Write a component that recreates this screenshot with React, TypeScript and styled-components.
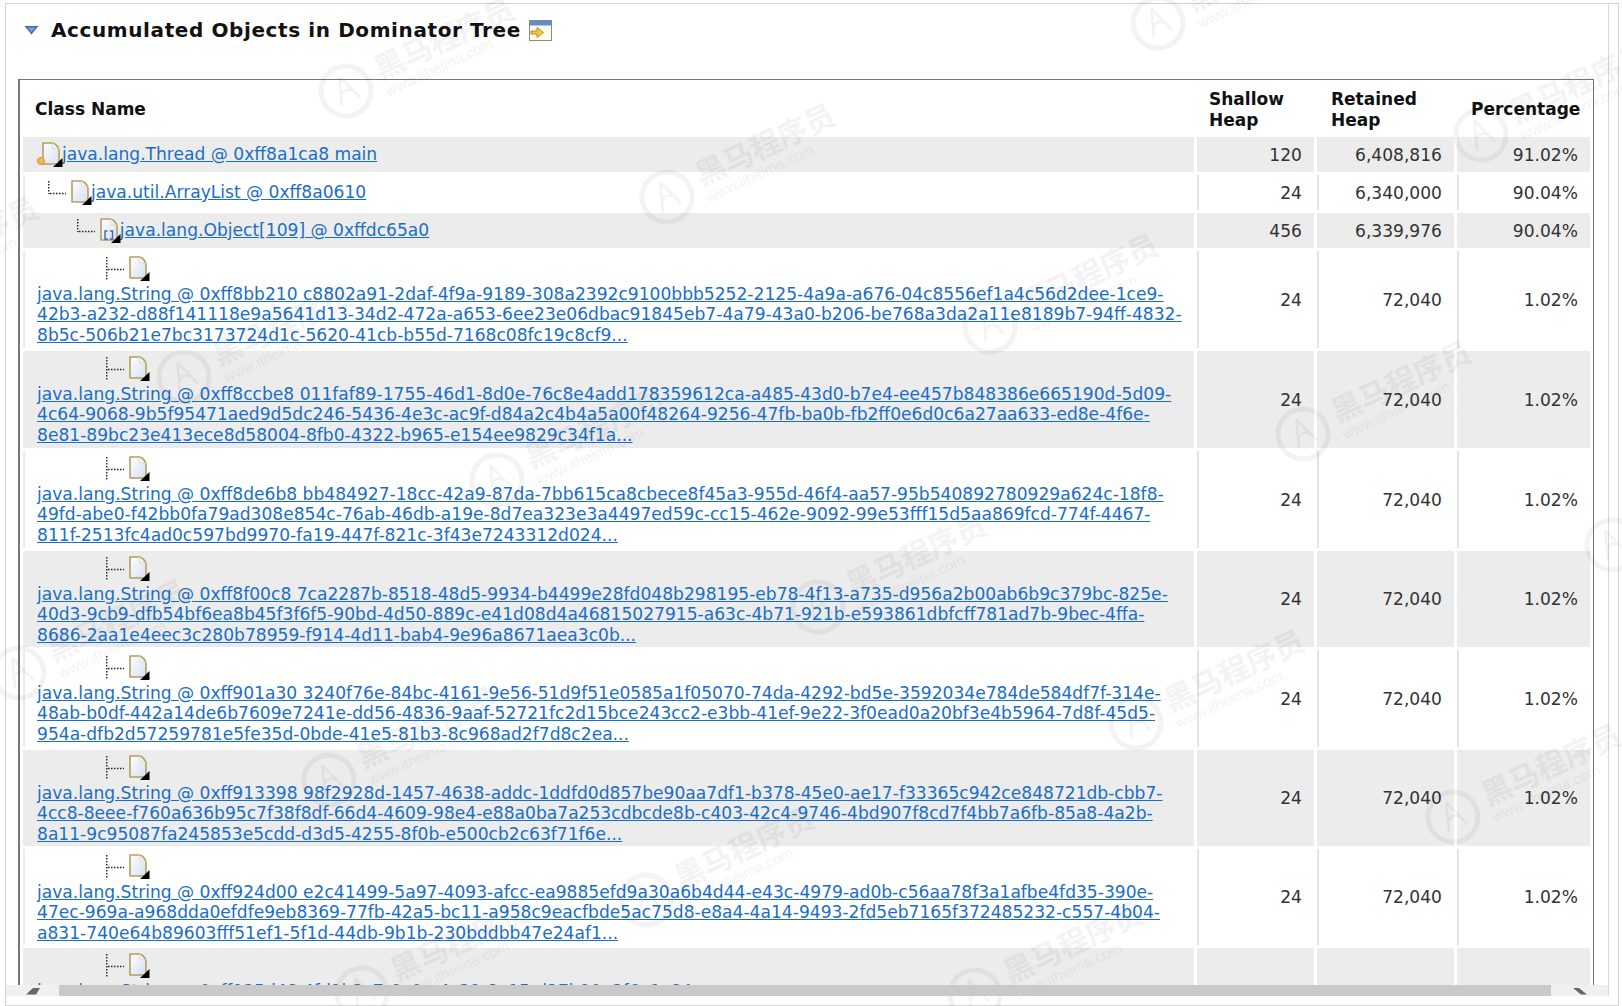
import styled, { createGlobalStyle } from 'styled-components';

type ObjectRow = {
  level: number;
  kind?: 'thread' | 'array';
  lines: string[];
  shallow: string;
  retained: string;
  percent: string;
  height: number;
};

const stringRow = (lines: string[], height = 97): ObjectRow => ({
  level: 3,
  lines,
  shallow: '24',
  retained: '72,040',
  percent: '1.02%',
  height,
});

const rows: ObjectRow[] = [
  { level: 0, kind: 'thread', lines: ['java.lang.Thread @ 0xff8a1ca8 main'], shallow: '120', retained: '6,408,816', percent: '91.02%', height: 35 },
  { level: 1, lines: ['java.util.ArrayList @ 0xff8a0610'], shallow: '24', retained: '6,340,000', percent: '90.04%', height: 35 },
  { level: 2, kind: 'array', lines: ['java.lang.Object[109] @ 0xffdc65a0'], shallow: '456', retained: '6,339,976', percent: '90.04%', height: 35 },
  stringRow([
    'java.lang.String @ 0xff8bb210 c8802a91-2daf-4f9a-9189-308a2392c9100bbb5252-2125-4a9a-a676-04c8556ef1a4c56d2dee-1ce9-',
    '42b3-a232-d88f141118e9a5641d13-34d2-472a-a653-6ee23e06dbac91845eb7-4a79-43a0-b206-be768a3da2a11e8189b7-94ff-4832-',
    '8b5c-506b21e7bc3173724d1c-5620-41cb-b55d-7168c08fc19c8cf9...',
  ]),
  stringRow([
    'java.lang.String @ 0xff8ccbe8 011faf89-1755-46d1-8d0e-76c8e4add178359612ca-a485-43d0-b7e4-ee457b848386e665190d-5d09-',
    '4c64-9068-9b5f95471aed9d5dc246-5436-4e3c-ac9f-d84a2c4b4a5a00f48264-9256-47fb-ba0b-fb2ff0e6d0c6a27aa633-ed8e-4f6e-',
    '8e81-89bc23e413ece8d58004-8fb0-4322-b965-e154ee9829c34f1a...',
  ]),
  stringRow([
    'java.lang.String @ 0xff8de6b8 bb484927-18cc-42a9-87da-7bb615ca8cbece8f45a3-955d-46f4-aa57-95b540892780929a624c-18f8-',
    '49fd-abe0-f42bb0fa79ad308e854c-76ab-46db-a19e-8d7ea323e3a4497ed59c-cc15-462e-9092-99e53fff15d5aa869fcd-774f-4467-',
    '811f-2513fc4ad0c597bd9970-fa19-447f-821c-3f43e7243312d024...',
  ]),
  stringRow([
    'java.lang.String @ 0xff8f00c8 7ca2287b-8518-48d5-9934-b4499e28fd048b298195-eb78-4f13-a735-d956a2b00ab6b9c379bc-825e-',
    '40d3-9cb9-dfb54bf6ea8b45f3f6f5-90bd-4d50-889c-e41d08d4a46815027915-a63c-4b71-921b-e593861dbfcff781ad7b-9bec-4ffa-',
    '8686-2aa1e4eec3c280b78959-f914-4d11-bab4-9e96a8671aea3c0b...',
  ], 96),
  stringRow([
    'java.lang.String @ 0xff901a30 3240f76e-84bc-4161-9e56-51d9f51e0585a1f05070-74da-4292-bd5e-3592034e784de584df7f-314e-',
    '48ab-b0df-442a14de6b7609e7241e-dd56-4836-9aaf-52721fc2d15bce243cc2-e3bb-41ef-9e22-3f0ead0a20bf3e4b5964-7d8f-45d5-',
    '954a-dfb2d57259781e5fe35d-0bde-41e5-81b3-8c968ad2f7d8c2ea...',
  ]),
  stringRow([
    'java.lang.String @ 0xff913398 98f2928d-1457-4638-addc-1ddfd0d857be90aa7df1-b378-45e0-ae17-f33365c942ce848721db-cbb7-',
    '4cc8-8eee-f760a636b95c7f38f8df-66d4-4609-98e4-e88a0ba7a253cdbcde8b-c403-42c4-9746-4bd907f8cd7f4bb7a6fb-85a8-4a2b-',
    '8a11-9c95087fa245853e5cdd-d3d5-4255-8f0b-e500cb2c63f71f6e...',
  ], 96),
  stringRow([
    'java.lang.String @ 0xff924d00 e2c41499-5a97-4093-afcc-ea9885efd9a30a6b4d44-e43c-4979-ad0b-c56aa78f3a1afbe4fd35-390e-',
    '47ec-969a-a968dda0efdfe9eb8369-77fb-42a5-bc11-a958c9eacfbde5ac75d8-e8a4-4a14-9493-2fd5eb7165f372485232-c557-4b04-',
    'a831-740e64b89603fff51ef1-5f1d-44db-9b1b-230bddbb47e24af1...',
  ], 96),
  stringRow(['java.lang.String @ 0xff935d48 4fd1b2c7-6e0a-4c39-8a15-d27b90e3f6a1c84e'], 97),
];

// circle centres of the faint brand stamps
const stamps = [
  [1158, 23], [346, 91], [1481, 135], [667, 197], [-130, 290], [990, 327], [184, 377], [497, 480],
  [1303, 434], [1612, 545], [818, 607], [19, 673], [1136, 723], [329, 780], [1453, 817],
  [646, 900], [975, 995], [362, 993],
];

function DocIcon({ kind }: { kind?: ObjectRow['kind'] }) {
  return (
    <IconSvg width="22" height="26" viewBox="0 0 22 26">
      <defs>
        <linearGradient id="docFill" x1="0" y1="0" x2="1" y2="1">
          <stop offset="0" stopColor="#ffffff" />
          <stop offset="1" stopColor="#d5def2" />
        </linearGradient>
      </defs>
      <path
        d="M1 1H10.5C13 1 16.5 5 17 8V22H1Z"
        fill="url(#docFill)"
        stroke="#b39f63"
        strokeWidth="1.6"
        strokeLinejoin="round"
      />
      <path d="M10.5 1V7H17" fill="none" stroke="#e8dcb4" strokeWidth="0.8" />
      {kind === 'array' && (
        <path d="M7.5 13H5V21H7.5M10 13H12.5V21H10" fill="none" stroke="#3a6ea8" strokeWidth="1.4" />
      )}
      <path d="M11 25H20.5V16Z" fill="#000" />
    </IconSvg>
  );
}

function TreeConnector({ tee }: { tee: boolean }) {
  return (
    <ConnectorSvg width="23" height="26" viewBox="0 0 23 26">
      <path
        d={tee ? 'M0.75 1V25M2 13.5H18' : 'M0.75 1V14M2 13.5H18'}
        fill="none"
        stroke="#222"
        strokeWidth="1.4"
        strokeDasharray="1.5 1.5"
      />
    </ConnectorSvg>
  );
}

function Stamp({ x, y }: { x: number; y: number }) {
  return (
    <StampWrap style={{ left: x - 30, top: y - 30 }}>
      <svg width="60" height="60" viewBox="0 0 60 60">
        <circle cx="30" cy="30" r="25" fill="none" stroke="#000" strokeWidth="5" />
        <path d="M30 14L20 42M30 14L40 42M24 32C28 28 32 28 36 32" fill="none" stroke="#000" strokeWidth="2.5" />
      </svg>
      <StampText>
        <StampBrand>黑马程序员</StampBrand>
        <StampSite>www.itheima.com</StampSite>
      </StampText>
    </StampWrap>
  );
}

export default function App() {
  return (
    <Page>
      <GlobalStyle />
      <Frame>
        <Scroller>
          <Heading>
            <svg width="15" height="10" viewBox="0 0 15 10">
              <path d="M0.5 1H14.5L7.5 9.5Z" fill="#3d6fa6" />
              <path d="M3.5 2.5H11.5L7.5 7Z" fill="#7fa3cc" />
            </svg>
            <HeadingTitle>Accumulated Objects in Dominator Tree</HeadingTitle>
            <svg width="23" height="21" viewBox="0 0 23 21">
              <rect x="0.5" y="0.5" width="22" height="20" fill="#fdfbf0" stroke="#8c8c70" />
              <rect x="1" y="1" width="21" height="4.5" fill="#5d8fd0" />
              <path d="M2 11H8V7.5L14.5 12.5L8 17.5V14H2Z" fill="#f3c83e" stroke="#a8862a" strokeWidth="0.9" />
            </svg>
          </Heading>
          <TableBox>
            <Table>
              <colgroup>
                <col style={{ width: 1171 }} />
                <col style={{ width: 117 }} />
                <col style={{ width: 137 }} />
                <col style={{ width: 133 }} />
              </colgroup>
              <thead>
                <tr>
                  <HeadCell $pad={12}>Class Name</HeadCell>
                  <HeadCell $pad={12}>Shallow<br />Heap</HeadCell>
                  <HeadCell $pad={14}>Retained<br />Heap</HeadCell>
                  <HeadCell $pad={14}>Percentage</HeadCell>
                </tr>
              </thead>
              <tbody>
                {rows.map((row, i) => {
                  const shaded = i % 2 === 0;
                  const tall = row.level === 3;
                  return (
                    <tr key={row.lines[0]} style={{ height: row.height }}>
                      <NameCell $shaded={shaded}>
                        <TreeLine $level={row.level} $tall={tall}>
                          {row.level > 0 && <TreeConnector tee={tall} />}
                          <IconSlot>
                            <DocIcon kind={row.kind} />
                            {row.kind === 'thread' && <ThreadDot />}
                          </IconSlot>
                          {!tall && <ShortLink href="#">{row.lines[0]}</ShortLink>}
                        </TreeLine>
                        {tall && (
                          <LongName>
                            {row.lines.map((line) => (
                              <ObjectLink href="#" key={line}>{line}</ObjectLink>
                            ))}
                          </LongName>
                        )}
                      </NameCell>
                      <NumCell $shaded={shaded}>{row.shallow}</NumCell>
                      <NumCell $shaded={shaded}>{row.retained}</NumCell>
                      <NumCell $shaded={shaded}>{row.percent}</NumCell>
                    </tr>
                  );
                })}
              </tbody>
            </Table>
          </TableBox>
          <ScrollBar>
            <ScrollEnd $width={53}>
              <svg width="14" height="8" viewBox="0 0 14 8">
                <path d="M0 7.5L7 1H14L10 7.5Z" fill="#666" />
              </svg>
            </ScrollEnd>
            <ScrollThumb />
            <ScrollEnd $width={57}>
              <svg width="14" height="8" viewBox="0 0 14 8">
                <path d="M0 1H6L14 7.5H8Z" fill="#666" />
              </svg>
            </ScrollEnd>
          </ScrollBar>
        </Scroller>
      </Frame>
      {stamps.map(([x, y]) => (
        <Stamp key={`${x}-${y}`} x={x} y={y} />
      ))}
    </Page>
  );
}

const GlobalStyle = createGlobalStyle`
  html, body {
    margin: 0;
    padding: 0;
    background: #fff;
  }
`;

const Page = styled.div`
  position: relative;
  width: 1622px;
  height: 1006px;
  overflow: hidden;
  padding: 3px 3px 0 5px;
  box-sizing: border-box;
  background: #fff;
  font-family: 'DejaVu Sans', Verdana, sans-serif;
`;

const Frame = styled.div`
  box-sizing: border-box;
  height: 1003px;
  border: 1px solid #d2d2d2;
`;

const Scroller = styled.div`
  display: flex;
  flex-direction: column;
  box-sizing: border-box;
  width: 1603px;
  height: 992px;
  border-right: 1px solid #d8d8d8;
  overflow: hidden;
`;

const Heading = styled.div`
  display: flex;
  align-items: center;
  flex: none;
  height: 52px;
  margin-bottom: 23px;
  padding-left: 18px;
`;

const HeadingTitle = styled.h2`
  margin: 0 8px 0 12px;
  font-size: 20px;
  letter-spacing: 0.6px;
  font-weight: 700;
  color: #111;
`;

const TableBox = styled.div`
  flex: 1;
  min-height: 0;
  box-sizing: border-box;
  width: 1576px;
  margin-left: 12px;
  border-top: 1px solid #777;
  border-left: 2px solid #777;
  border-right: 1px solid #777;
  overflow: hidden;
`;

const Table = styled.table`
  table-layout: fixed;
  width: 1573px;
  border-collapse: separate;
  border-spacing: 3px;
  margin: 0;
  color: #333;
  font-size: 17.1px;
`;

const HeadCell = styled.th<{ $pad: number }>`
  box-sizing: border-box;
  height: 51px;
  padding: 2px 0 0 ${(p) => p.$pad}px;
  text-align: left;
  font-size: 17px;
  line-height: 21px;
  font-weight: 700;
  color: #111;
`;

const NameCell = styled.td<{ $shaded: boolean }>`
  box-sizing: border-box;
  padding: 0;
  vertical-align: top;
  background: ${(p) => (p.$shaded ? '#ececec' : '#fff')};
  border-left: 2px solid ${(p) => (p.$shaded ? '#ececec' : '#eaeaea')};
`;

const NumCell = styled.td<{ $shaded: boolean }>`
  box-sizing: border-box;
  padding: 0 12px 0 0;
  text-align: right;
  vertical-align: middle;
  background: ${(p) => (p.$shaded ? '#ececec' : '#fff')};
  border-left: 2px solid ${(p) => (p.$shaded ? '#ececec' : '#e4e4e4')};
`;

const TreeLine = styled.div<{ $level: number; $tall: boolean }>`
  display: flex;
  align-items: flex-start;
  height: ${(p) => (p.$tall ? 26 : 29)}px;
  padding-top: 5px;
  padding-left: ${(p) => (p.$level === 0 ? 17 : 23 + (p.$level - 1) * 28.85)}px;
`;

const IconSlot = styled.span`
  position: relative;
  flex: none;
  width: 20px;
  height: 26px;
`;

const IconSvg = styled.svg`
  display: block;
`;

const ConnectorSvg = styled.svg`
  flex: none;
  display: block;
`;

const ThreadDot = styled.span`
  position: absolute;
  left: -5px;
  top: 15px;
  width: 6px;
  height: 6px;
  border: 1.5px solid #e08a20;
  border-radius: 50%;
  background: #f7b45c;
`;

const ObjectLink = styled.a`
  display: block;
  width: fit-content;
  color: #1b6ec6;
  white-space: nowrap;
  text-decoration: underline;
  line-height: 20.4px;
`;

const ShortLink = styled(ObjectLink)`
  margin-top: 2px;
`;

const LongName = styled.div`
  padding: 2px 0 0 12px;
`;

const ScrollBar = styled.div`
  position: relative;
  z-index: 1;
  display: flex;
  flex: none;
  height: 11px;
  background: #f0f0f0;
`;

const ScrollEnd = styled.div<{ $width: number }>`
  display: flex;
  align-items: center;
  justify-content: center;
  flex: none;
  width: ${(p) => p.$width}px;
`;

const ScrollThumb = styled.div`
  flex: 1;
  background: #c9c9c9;
`;

const StampWrap = styled.div`
  position: absolute;
  display: flex;
  align-items: center;
  gap: 6px;
  opacity: 0.045;
  transform: rotate(-25deg);
  transform-origin: 30px 30px;
  pointer-events: none;
`;

const StampText = styled.div`
  display: flex;
  flex-direction: column;
  color: #000;
`;

const StampBrand = styled.span`
  font-family: 'Noto Sans CJK SC', sans-serif;
  font-size: 30px;
  font-weight: 700;
  line-height: 34px;
  white-space: nowrap;
`;

const StampSite = styled.span`
  font-family: 'Liberation Sans', sans-serif;
  font-size: 15px;
  line-height: 17px;
  white-space: nowrap;
`;
